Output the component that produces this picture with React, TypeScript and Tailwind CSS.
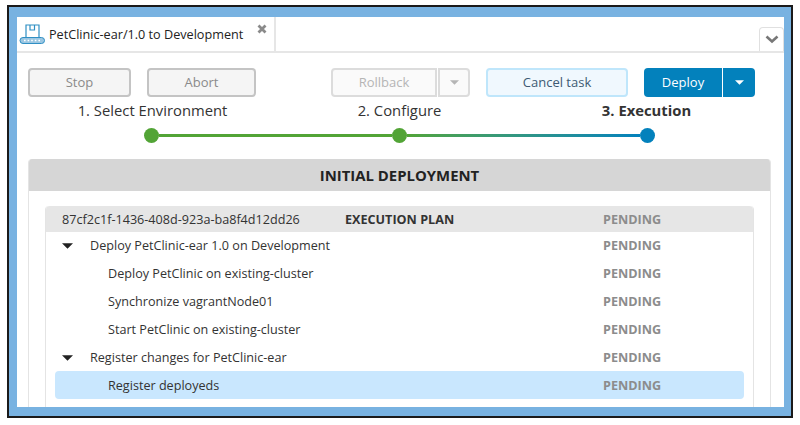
import React from "react";

const Caret = ({ color, w = 12, h = 6 }: { color: string; w?: number; h?: number }) => (
  <svg width={w} height={h} viewBox="0 0 12 6" className="shrink-0">
    <path d="M0 0H12L6 6Z" fill={color} />
  </svg>
);

const rows: { label: string; indent: boolean; selected?: boolean }[] = [
  { label: "Deploy PetClinic-ear 1.0 on Development", indent: false },
  { label: "Deploy PetClinic on existing-cluster", indent: true },
  { label: "Synchronize vagrantNode01", indent: true },
  { label: "Start PetClinic on existing-cluster", indent: true },
  { label: "Register changes for PetClinic-ear", indent: false },
  { label: "Register deployeds", indent: true, selected: true },
];

export default function App() {
  return (
    <div className="w-[800px] h-[425px] bg-white pt-[5px] pl-[7px] pr-[7px] pb-[7px] overflow-hidden font-['Open_Sans',sans-serif] text-[#333]">
      <div className="h-full border-2 border-[#1a1a1a] bg-[#78b2e1] pt-[10px] pl-[8px] pr-[7px] pb-[9px]">
        <div className="h-full bg-white flex flex-col overflow-hidden">
          {/* tabs */}
          <div className="h-[36px] shrink-0 flex justify-between border-b-2 border-[#e6e6e6]">
            <div className="w-[259px] border-r-2 border-[#e6e6e6] flex relative pl-[2px] items-center">
              <svg width="26" height="22" viewBox="0 0 26 22" className="shrink-0">
                <path d="M7 15V2H20V15" fill="none" stroke="#2f8fc4" strokeWidth="1.2" />
                <path d="M11 2V7H15.5V2" fill="none" stroke="#2f8fc4" strokeWidth="1.2" />
                <rect x="1" y="14.5" width="24.5" height="6" rx="3" fill="#9cc7e2" stroke="#2f8fc4" strokeWidth="1" />
                <path d="M5 17.5H22" stroke="#ffffff" strokeWidth="1.6" strokeDasharray="1.6 2" />
              </svg>
              <span className="ml-[4px] text-[12.65px] text-[#222] whitespace-nowrap">PetClinic-ear/1.0 to Development</span>
              <svg width="10" height="10" viewBox="0 0 10 10" className="absolute right-[7px] top-[7px]">
                <path d="M1.5 1.5L8.5 8.5M8.5 1.5L1.5 8.5" stroke="#8a8a8a" strokeWidth="2.8" />
              </svg>
            </div>
            <div className="self-end w-[25px] h-[24px] border border-b-0 border-[#e0e0e0] rounded-t-[4px] flex items-center justify-center">
              <svg width="14" height="9" viewBox="0 0 14 9">
                <path d="M1.5 1.5L7 6.5L12.5 1.5" fill="none" stroke="#777" strokeWidth="2.6" />
              </svg>
            </div>
          </div>

          {/* actions */}
          <div className="flex items-start pl-[11px] pt-[15px] h-[30px] box-content shrink-0 text-[13px]">
            <div className="w-[103px] h-[29px] rounded-[4px] border-2 border-[#c4c4c4] bg-[#f5f5f5] flex items-center justify-center text-[#8a8a8a]">Stop</div>
            <div className="ml-[16px] w-[109px] h-[29px] rounded-[4px] border-2 border-[#c4c4c4] bg-[#f5f5f5] flex items-center justify-center text-[#8a8a8a]">Abort</div>
            <div className="ml-[75px] w-[106px] h-[29px] rounded-l-[4px] border-2 border-[#dcdcdc] bg-[#fafafa] flex items-center justify-center text-[#b5b5b5]">Rollback</div>
            <div className="ml-[1px] w-[32px] h-[29px] rounded-r-[4px] border-2 border-[#dcdcdc] bg-[#fafafa] flex items-center justify-center">
              <Caret color="#b5b5b5" w={9} h={5} />
            </div>
            <div className="ml-[16px] w-[142px] h-[29px] rounded-[4px] border-2 border-[#bfe6fb] bg-[#f0f8fe] flex items-center justify-center text-[#3d5a73]">Cancel task</div>
            <div className="ml-[16px] w-[78px] h-[29px] rounded-l-[4px] bg-[#0381bc] flex items-center justify-center text-white">Deploy</div>
            <div className="ml-[1px] w-[32px] h-[29px] rounded-r-[4px] bg-[#0381bc] flex items-center justify-center">
              <Caret color="#ffffff" w={9} h={5} />
            </div>
          </div>

          {/* step labels */}
          <div className="grid grid-cols-[247px_247px_247px] pl-[12px] h-[25px] shrink-0 text-[14.8px] leading-[25px] text-center">
            <div className="text-[#333]">1. Select Environment</div>
            <div className="text-[#333]">2. Configure</div>
            <div className="font-bold text-[#333]">3. Execution</div>
          </div>

          {/* stepper */}
          <div className="flex items-center pl-[127px] mt-[5px] h-[14px] shrink-0">
            <div className="w-[15px] h-[15px] rounded-full bg-[#52a436] shrink-0" />
            <div className="w-[233px] h-[3px] bg-[#52a436]" />
            <div className="w-[15px] h-[15px] rounded-full bg-[#52a436] shrink-0" />
            <div className="w-[233px] h-[3px] bg-gradient-to-r from-[#52a436] to-[#0381bc]" />
            <div className="w-[15px] h-[15px] rounded-full bg-[#0381bc] shrink-0" />
          </div>

          {/* panel */}
          <div className="mt-[17px] ml-[11px] w-[743px] flex-1 border-x border-[#e4e4e4] flex flex-col rounded-t-[4px] overflow-hidden">
            <div className="h-[32px] shrink-0 bg-[#d6d6d6] flex items-center justify-center text-[14.9px] font-bold text-[#222]">
              INITIAL DEPLOYMENT
            </div>
            <div className="flex-1 pt-[15px] pl-[16px] pr-[16px]">
              <div className="h-full border-x border-[#e4e4e4] rounded-t-[4px] flex flex-col text-[12.62px]">
                <div className="h-[26px] shrink-0 bg-[#e6e6e6] flex items-center rounded-t-[4px] pl-[16px] pt-[3px]">
                  <span className="w-[283px] text-[#333]">87cf2c1f-1436-408d-923a-ba8f4d12dd26</span>
                  <span className="w-[258px] font-bold text-[#333]">EXECUTION PLAN</span>
                  <span className="font-bold text-[#8c8c8c]">PENDING</span>
                </div>
                <div className="px-[9px] -mt-[1px]">
                  {rows.map((r) => (
                    <div
                      key={r.label}
                      className={`h-[28px] flex items-center rounded-[4px] pl-[7px] pt-[2px] ${r.selected ? "bg-[#c9e7fe]" : ""}`}
                    >
                      <div className="w-[46px] shrink-0 flex">
                        {r.indent ? null : <Caret color="#222" w={11} h={6} />}
                      </div>
                      <span className={`${r.indent ? "w-[495px]" : "w-[495px] -ml-[18px] mr-[18px]"} text-[#333] whitespace-nowrap`}>{r.label}</span>
                      <span className="font-bold text-[#8c8c8c]">PENDING</span>
                    </div>
                  ))}
                </div>
              </div>
            </div>
          </div>
        </div>
      </div>
    </div>
  );
}
